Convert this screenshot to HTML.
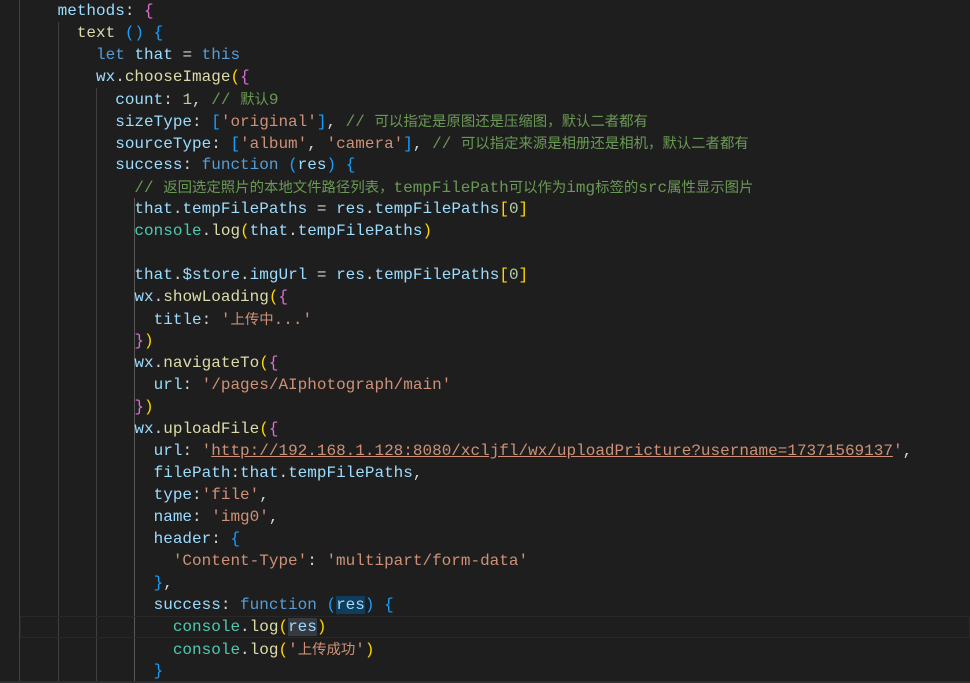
<!DOCTYPE html>
<html><head><meta charset="utf-8"><style>
html,body{margin:0;padding:0;background:#1e1e1e;width:970px;height:683px;overflow:hidden}
.ed{position:relative;width:970px;height:683px;font-family:"Liberation Mono","Noto Sans CJK SC",monospace;font-size:16px;color:#d4d4d4}
.l{position:absolute;left:0;height:22px;line-height:22px;white-space:pre}
.c{font-family:"Noto Sans CJK SC",sans-serif;font-size:14.4px}
.k{color:#9cdcfe}.b{color:#569cd6}.s{color:#ce9178}.m{color:#6a9955}.n{color:#b5cea8}.f{color:#dcdcaa}.t{color:#4ec9b0}
.g1{color:#ffd700}.g2{color:#da70d6}.g3{color:#179fff}
.g{position:absolute;width:1px;background:#404040}
.cur{position:absolute;left:20px;right:0;top:616px;height:20px;border:1px solid #282828}
.u{text-decoration:underline}
</style></head><body><div class="ed">
<div class="g" style="left:19px;top:0;height:683px"></div>
<div class="g" style="left:58px;top:22px;height:661px"></div>
<div class="g" style="left:96px;top:88px;height:595px"></div>
<div class="g" style="left:134px;top:198px;height:485px;background:#585858"></div>
<div class="cur"></div>
<div class="l" style="top:0">      <span class="k">methods</span>: <span class="g2">{</span></div>
<div class="l" style="top:22px">        <span class="f">text</span> <span class="g3">()</span> <span class="g3">{</span></div>
<div class="l" style="top:44px">          <span class="b">let</span> <span class="k">that</span> = <span class="b">this</span></div>
<div class="l" style="top:66px">          <span class="k">wx</span>.<span class="f">chooseImage</span><span class="g1">(</span><span class="g2">{</span></div>
<div class="l" style="top:88px">            <span class="k">count</span>: <span class="n">1</span>, <span class="m">// <span class="c">默认</span>9</span></div>
<div class="l" style="top:110px">            <span class="k">sizeType</span>: <span class="g3">[</span><span class="s">'original'</span><span class="g3">]</span>, <span class="m">// <span class="c">可以指定是原图还是压缩图，默认二者都有</span></span></div>
<div class="l" style="top:132px">            <span class="k">sourceType</span>: <span class="g3">[</span><span class="s">'album'</span>, <span class="s">'camera'</span><span class="g3">]</span>, <span class="m">// <span class="c">可以指定来源是相册还是相机，默认二者都有</span></span></div>
<div class="l" style="top:154px">            <span class="k">success</span>: <span class="b">function</span> <span class="g3">(</span><span class="k">res</span><span class="g3">)</span> <span class="g3">{</span></div>
<div class="l" style="top:176px">              <span class="m">// <span class="c">返回选定照片的本地文件路径列表，</span>tempFilePath<span class="c">可以作为</span>img<span class="c">标签的</span>src<span class="c">属性显示图片</span></span></div>
<div class="l" style="top:198px">              <span class="k">that</span>.<span class="k">tempFilePaths</span> = <span class="k">res</span>.<span class="k">tempFilePaths</span><span class="g1">[</span><span class="n">0</span><span class="g1">]</span></div>
<div class="l" style="top:220px">              <span class="t">console</span>.<span class="f">log</span><span class="g1">(</span><span class="k">that</span>.<span class="k">tempFilePaths</span><span class="g1">)</span></div>
<div class="l" style="top:264px">              <span class="k">that</span>.<span class="k">$store</span>.<span class="k">imgUrl</span> = <span class="k">res</span>.<span class="k">tempFilePaths</span><span class="g1">[</span><span class="n">0</span><span class="g1">]</span></div>
<div class="l" style="top:286px">              <span class="k">wx</span>.<span class="f">showLoading</span><span class="g1">(</span><span class="g2">{</span></div>
<div class="l" style="top:308px">                <span class="k">title</span>: <span class="s">'<span class="c">上传中</span>...'</span></div>
<div class="l" style="top:330px">              <span class="g2">}</span><span class="g1">)</span></div>
<div class="l" style="top:352px">              <span class="k">wx</span>.<span class="f">navigateTo</span><span class="g1">(</span><span class="g2">{</span></div>
<div class="l" style="top:374px">                <span class="k">url</span>: <span class="s">'/pages/AIphotograph/main'</span></div>
<div class="l" style="top:396px">              <span class="g2">}</span><span class="g1">)</span></div>
<div class="l" style="top:418px">              <span class="k">wx</span>.<span class="f">uploadFile</span><span class="g1">(</span><span class="g2">{</span></div>
<div class="l" style="top:440px">                <span class="k">url</span>: <span class="s">'<span class="u">http://192.168.1.128:8080/xcljfl/wx/uploadPricture?username=17371569137</span>'</span>,</div>
<div class="l" style="top:462px">                <span class="k">filePath</span>:<span class="k">that</span>.<span class="k">tempFilePaths</span>,</div>
<div class="l" style="top:484px">                <span class="k">type</span>:<span class="s">'file'</span>,</div>
<div class="l" style="top:506px">                <span class="k">name</span>: <span class="s">'img0'</span>,</div>
<div class="l" style="top:528px">                <span class="k">header</span>: <span class="g3">{</span></div>
<div class="l" style="top:550px">                  <span class="s">'Content-Type'</span>: <span class="s">'multipart/form-data'</span></div>
<div class="l" style="top:572px">                <span class="g3">}</span>,</div>
<div class="l" style="top:594px">                <span class="k">success</span>: <span class="b">function</span> <span class="g3">(</span><span class="k" style="background:#113d5c">res</span><span class="g3">)</span> <span class="g3">{</span></div>
<div class="l" style="top:616px">                  <span class="t">console</span>.<span class="f">log</span><span class="g1">(</span><span class="k" style="background:#343a40">res</span><span class="g1">)</span></div>
<div class="l" style="top:638px">                  <span class="t">console</span>.<span class="f">log</span><span class="g1">(</span><span class="s">'<span class="c">上传成功</span>'</span><span class="g1">)</span></div>
<div class="l" style="top:660px">                <span class="g3">}</span></div>
<div style="position:absolute;left:0;right:0;top:681px;height:2px;background:#2d2d2d"></div>
</div></body></html>
